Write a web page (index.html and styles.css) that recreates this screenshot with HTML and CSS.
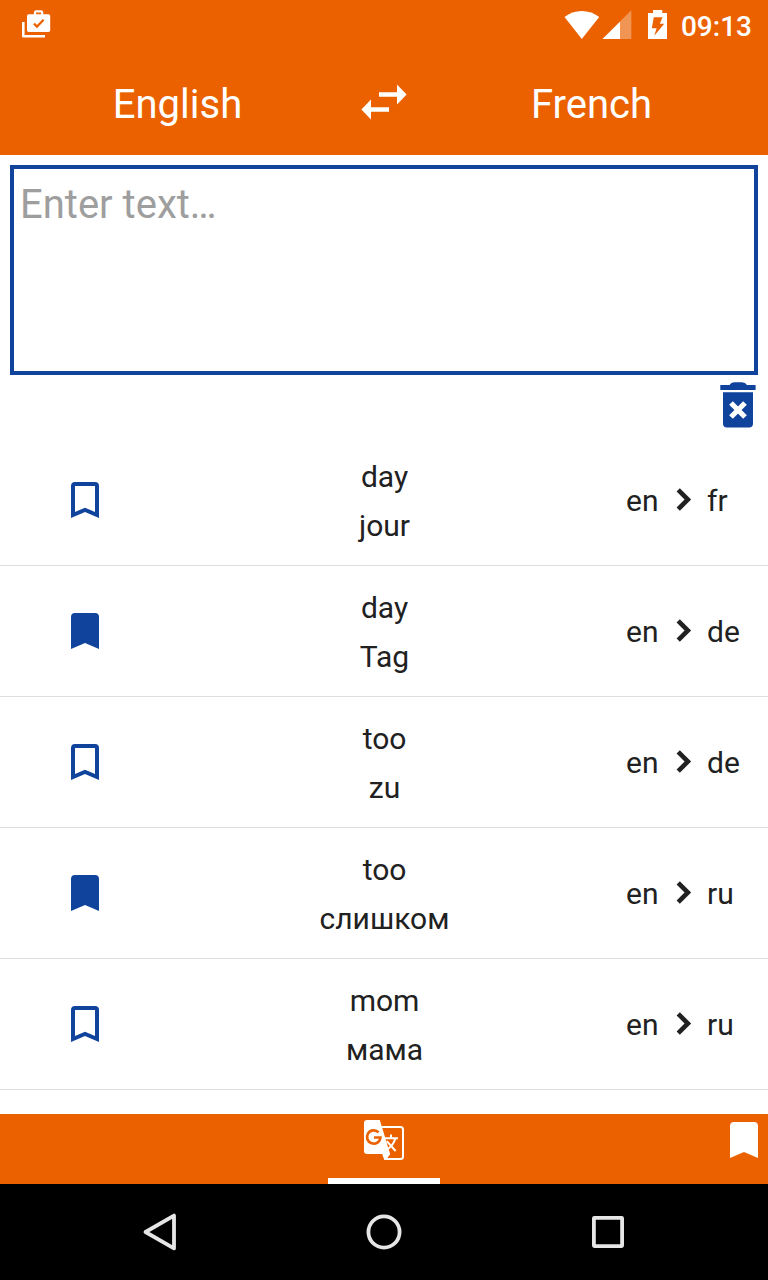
FILE: index.html
```html
<!DOCTYPE html>
<html lang="en">
<head>
<meta charset="utf-8">
<title>Translator</title>
<link rel="stylesheet" href="styles.css">
</head>
<body>
<svg class="defs" width="0" height="0">
  <symbol id="bookmark-outline" viewBox="0 0 28 36"><path fill-rule="evenodd" d="M4 0H24Q28 0 28 4V36L14 30L0 36V4Q0 0 4 0ZM4 4V30L14 25.7L24 30V4Z"/></symbol>
  <symbol id="bookmark" viewBox="0 0 28 36"><path d="M4 0H24Q28 0 28 4V36L14 30L0 36V4Q0 0 4 0Z"/></symbol>
  <symbol id="chevron" viewBox="0 0 16 26"><path d="M2.2 2.8L11.9 12.5L2.2 22.2" fill="none" stroke="#212121" stroke-width="4.6"/></symbol>
</svg>
<div class="screen">
  <header class="top">
    <div class="status">
      <svg width="30" height="30" viewBox="21 9 30 30"><path d="M23.3 22V36.3H45" fill="none" stroke="#fff" stroke-width="2.6" stroke-linejoin="round"/><path d="M35 15V12.5Q35 11.3 36.2 11.3H41Q42.2 11.3 42.2 12.5V15" fill="none" stroke="#fff" stroke-width="2.2"/><rect x="27" y="14.2" width="23.2" height="17.8" rx="1.8" fill="#fff"/><path d="M34 23.6L37 26.6L43.6 19.8" fill="none" stroke="#eb6100" stroke-width="2.2"/></svg>
      <div class="status-right">
        <svg width="106" height="32" viewBox="564 9 106 32" fill="#fff"><path d="M564.5 17Q572 11 581.8 11T599.2 17L581.8 39Z"/><path d="M602.5 39L631.3 10.3V39Z" opacity=".33"/><path d="M602.5 39L620 21.7V39Z"/><path d="M653 10H662.3V13H667V39H648V13H653Z"/><path d="M653.8 17.3H662.5L659.8 23.8H664.2L654.3 35.8L656.6 28.2H651.8Z" fill="#eb6100"/></svg>
        <span class="clock">09:13</span>
      </div>
    </div>
    <div class="languages">
      <span>English</span>
      <svg width="46" height="36" viewBox="361 84 46 36" fill="#fff"><path d="M379 92.2H397V84.5L406.6 94.5L397 104.5V96.8H379Z"/><path d="M389 107.2H371V99.5L361.4 109.5L371 119.5V111.8H389Z"/></svg>
      <span>French</span>
    </div>
  </header>
  <main class="content">
    <div class="entry">Enter text…</div>
    <div class="toolbar"><svg width="36" height="46" viewBox="720 382 36 46"><path d="M720.3 385H729.5Q731 382.3 734 382.3H742Q745.5 382.3 747 385H755.6V390H720.3ZM723 392.3H753V423.5Q753 427.6 749 427.6H727Q723 427.6 723 423.5Z" fill="#0f439c"/><path d="M731 403L745 417M745 403L731 417" stroke="#fff" stroke-width="5.2"/></svg></div>
    <ul class="history">
      <li class="row"><svg class="mark"><use href="#bookmark-outline"/></svg><div class="words"><span>day</span><span>jour</span></div><div class="pair"><span class="from">en</span><svg class="chev"><use href="#chevron"/></svg><span>fr</span></div></li>
      <li class="row"><svg class="mark"><use href="#bookmark"/></svg><div class="words"><span>day</span><span>Tag</span></div><div class="pair"><span class="from">en</span><svg class="chev"><use href="#chevron"/></svg><span>de</span></div></li>
      <li class="row"><svg class="mark"><use href="#bookmark-outline"/></svg><div class="words"><span>too</span><span>zu</span></div><div class="pair"><span class="from">en</span><svg class="chev"><use href="#chevron"/></svg><span>de</span></div></li>
      <li class="row"><svg class="mark"><use href="#bookmark"/></svg><div class="words"><span>too</span><span>слишком</span></div><div class="pair"><span class="from">en</span><svg class="chev"><use href="#chevron"/></svg><span>ru</span></div></li>
      <li class="row"><svg class="mark"><use href="#bookmark-outline"/></svg><div class="words"><span>mom</span><span>мама</span></div><div class="pair"><span class="from">en</span><svg class="chev"><use href="#chevron"/></svg><span>ru</span></div></li>
    </ul>
  </main>
  <nav class="tabs">
    <div class="tab-active">
      <svg width="42" height="42" viewBox="363 1119 42 42"><path d="M381.5 1127H400.5Q403 1127 403 1129.5V1156.5Q403 1159 400.5 1159H386" fill="none" stroke="#fff" stroke-width="2"/><path d="M367 1120H379.8L390.2 1154.3L385.8 1160H384.3L382.2 1154H367Q364 1154 364 1151V1123Q364 1120 367 1120Z" fill="#fff"/><path d="M378.6 1132.4A6.7 6.7 0 1 0 380.4 1137.5H374" fill="none" stroke="#eb6100" stroke-width="2.7"/><path d="M384.5 1138.2H398M391 1134.6V1138M395.3 1138.5Q393.5 1145.5 386.5 1150M386.8 1141.2L395.6 1151" fill="none" stroke="#fff" stroke-width="2"/></svg>
    </div>
    <svg class="tab-bookmark"><use href="#bookmark"/></svg>
  </nav>
  <footer class="system">
    <svg width="40" height="40" viewBox="140 1212 40 40"><path d="M145.5 1232L174 1215.6V1248.4Z"/></svg>
    <svg width="40" height="40" viewBox="364 1212 40 40"><circle cx="384" cy="1232" r="15.6"/></svg>
    <svg width="40" height="40" viewBox="588 1212 40 40"><rect x="593.9" y="1217.9" width="28.2" height="28.2" rx=".5"/></svg>
  </footer>
</div>
</body>
</html>
```
FILE: styles.css
```css
* { box-sizing: border-box; }
body { margin: 0; background: #fff; font-family: Roboto, sans-serif; color: #212121; }
svg { display: block; flex: none; }
.defs { position: absolute; }
.screen { width: 768px; height: 1280px; display: flex; flex-direction: column; overflow: hidden; }
.top { height: 155px; background: #eb6100; color: #fff; }
.status { height: 50px; display: flex; justify-content: space-between; align-items: flex-start; padding: 9px 16px 0 21px; }
.status-right { display: flex; gap: 11px; }
.clock { font-size: 28px; font-weight: 500; line-height: 34px; padding-top: 1px; }
.languages { height: 105px; display: grid; grid-template-columns: 354px 60px 354px; justify-items: center; align-items: center; padding-bottom: 1px; font-size: 40px; line-height: 50px; }
.languages span { padding: 6px 0 0 1px; }
.languages svg { margin-top: -1px; }
.content { height: 959px; padding-top: 10px; }
.entry { height: 210px; margin: 0 10px; border: 4px solid #0f439c; padding: 11px 6px; color: #9e9e9e; font-size: 40px; line-height: 50px; }
.toolbar { height: 60px; display: flex; justify-content: flex-end; padding: 7px 12px 0; }
.history { list-style: none; margin: 0; padding: 0; }
.row { height: 131px; border-bottom: 1px solid #dedede; display: grid; grid-template-columns: 170px 428px 170px; align-items: center; font-size: 30px; }
.mark { width: 28px; height: 36px; fill: #0f439c; justify-self: center; }
.words { display: flex; flex-direction: column; align-items: center; line-height: 49px; padding: 2px 0 0 1px; }
.pair { display: flex; align-items: center; padding: 2px 0 0 28px; line-height: 40px; }
.from { width: 50px; }
.chev { width: 16px; height: 26px; margin: -2px 15px 0 0; }
.tabs { height: 70px; background: #eb6100; display: grid; grid-template-columns: 328px 112px 328px; }
.tab-active { grid-column: 2; display: flex; justify-content: center; padding-top: 5px; border-bottom: 6px solid #fff; }
.tab-bookmark { width: 28px; height: 36px; fill: #fff; justify-self: end; margin: 8px 10px 0 0; }
.system { height: 96px; background: #000; display: flex; justify-content: space-between; align-items: center; padding: 0 140px; }
.system svg { fill: none; stroke: #e6e6e6; stroke-width: 3.8; stroke-linejoin: round; }
```
